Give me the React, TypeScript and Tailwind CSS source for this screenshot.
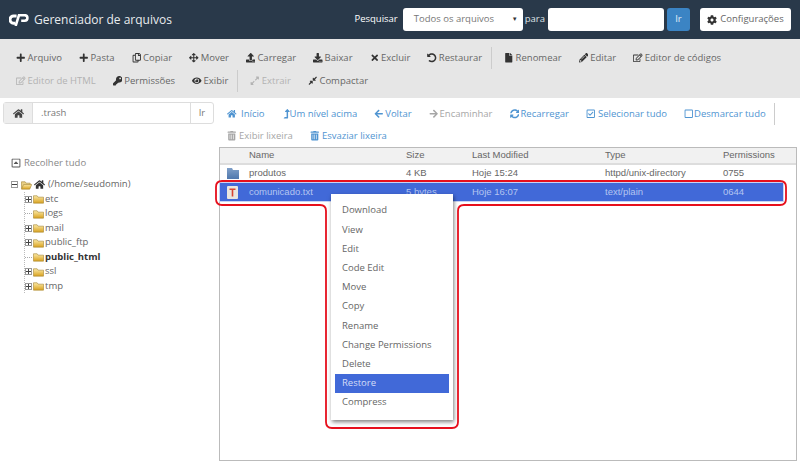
import { ReactNode } from "react";
import {
  FaArrowLeft,
  FaArrowRight,
  FaArrowsAlt,
  FaCog,
  FaCompressAlt,
  FaDownload,
  FaExpandAlt,
  FaEye,
  FaFile,
  FaHome,
  FaKey,
  FaLevelUpAlt,
  FaPencilAlt,
  FaPlus,
  FaRegCaretSquareUp,
  FaRegCheckSquare,
  FaRegCopy,
  FaRegEdit,
  FaRegSquare,
  FaSyncAlt,
  FaTimes,
  FaTrashAlt,
  FaUndoAlt,
  FaUpload,
} from "react-icons/fa";

const sans = "font-['Open_Sans',sans-serif]";
const arial = "font-['Liberation_Sans',Arial,sans-serif]";

function Tool({ icon, label, off }: { icon: ReactNode; label: string; off?: boolean }) {
  return (
    <span className={`flex items-center gap-[2px] whitespace-nowrap ${off ? "text-[#b3b3b3]" : "text-[#666]"}`}>
      <span className={`text-[9.5px] ${off ? "text-[#b3b3b3]" : "text-[#333]"}`}>{icon}</span>
      {label}
    </span>
  );
}

function Nav({ icon, label, off, slot }: { icon: ReactNode; label: string; off?: boolean; slot: string }) {
  return (
    <span className={`flex items-center whitespace-nowrap ${off ? "text-[#a6a6a6]" : "text-[#4f94d1]"}`}>
      <span className={`text-[9.5px] ${slot}`}>{icon}</span>
      {label}
    </span>
  );
}

function Sep() {
  return <span className="block w-px h-[22px] bg-[#ccc]" />;
}

function Folder({ open }: { open?: boolean }) {
  return (
    <svg width="11" height="10" viewBox="0 0 12 10" className="shrink-0">
      <defs>
        <linearGradient id="fold" x1="0" y1="0" x2="0" y2="1">
          <stop offset="0" stopColor="#fbe9a6" />
          <stop offset="1" stopColor="#d9a21f" />
        </linearGradient>
      </defs>
      {open ? (
        <>
          <path d="M0.5 9V1.5h4l1 1.5h4.5v2" fill="#e8cf86" stroke="#a98a3c" strokeWidth="0.7" />
          <path d="M0.5 9.5 2.8 4.5h8.9l-2.2 5z" fill="url(#fold)" stroke="#a98a3c" strokeWidth="0.7" />
        </>
      ) : (
        <path d="M0.5 1.5h4l1 1.5h6v6.5h-11z" fill="url(#fold)" stroke="#a98a3c" strokeWidth="0.7" />
      )}
    </svg>
  );
}

function Expander({ open }: { open?: boolean }) {
  return (
    <span className="relative w-[7px] h-[7px] border border-[#999] bg-white shrink-0">
      <span className="absolute left-0 top-[2px] w-[5px] h-px bg-[#444]" />
      {!open && <span className="absolute left-[2px] top-0 w-px h-[5px] bg-[#444]" />}
    </span>
  );
}

function TreeRow({ label, expand, bold }: { label: string; expand?: boolean; bold?: boolean }) {
  return (
    <div className="flex items-center h-[14.5px]">
      <span className="w-[7px] flex justify-center mr-[1px]">
        {expand ? <Expander /> : <span className="w-[7px] border-t border-dotted border-[#aaa]" />}
      </span>
      <Folder />
      <span className={`ml-[1px] ${bold ? "font-bold text-[#333]" : ""}`}>{label}</span>
    </div>
  );
}

const cols = "grid grid-cols-[29px_157px_66px_133px_118px_1fr] items-center";

const menu = ["Download", "View", "Edit", "Code Edit", "Move", "Copy", "Rename", "Change Permissions", "Delete", "Restore", "Compress"];

export default function App() {
  return (
    <div className={`relative w-[800px] h-[463px] overflow-hidden bg-white text-[9.5px] ${sans}`}>
      <header className="h-[39px] bg-[#29394a] flex items-center pl-[9px] pr-[9px] text-white">
        <svg width="20" height="12" viewBox="0 0 20 12" className="shrink-0">
          <path d="M7.6 2H4.8a3.2 3.2 0 0 0-.4 7.2h1.8" fill="none" stroke="#fff" strokeWidth="3" />
          <path d="M6.6 12 10 1.2h5.6a2.6 2.6 0 0 1 0 5.6h-3.4" fill="none" stroke="#fff" strokeWidth="2.6" />
        </svg>
        <span className="ml-[5px] text-[12px] text-[#e8ebee]">Gerenciador de arquivos</span>
        <span className="ml-auto">Pesquisar</span>
        <span className="ml-[5px] w-[120px] h-[23px] bg-white rounded-[3px] flex items-center justify-between pl-[11px] pr-[5px] text-[#777]">
          Todos os arquivos
          <span className="text-[6px] text-[#333]">▼</span>
        </span>
        <span className="ml-[2px] text-[#dfe3e7]">para</span>
        <span className="ml-[3px] w-[116px] h-[23px] bg-white rounded-[3px]" />
        <span className="ml-[3px] w-[23px] h-[23px] bg-[#3b84c4] rounded-[3px] flex items-center justify-center text-[#e4eef7]">Ir</span>
        <span className="ml-[10px] w-[91px] h-[23px] bg-white rounded-[3px] flex items-center justify-center gap-[3px] text-[#666]">
          <FaCog className="text-[10px] text-[#333]" />
          Configurações
        </span>
      </header>

      <div className="h-[59px] bg-[#e6e6e6] pl-[16px] pt-[8px] flex flex-col gap-[1px]">
        <div className="h-[22px] flex items-center gap-[17px]">
          <Tool icon={<FaPlus />} label="Arquivo" />
          <Tool icon={<FaPlus />} label="Pasta" />
          <Tool icon={<FaRegCopy />} label="Copiar" />
          <Tool icon={<FaArrowsAlt />} label="Mover" />
          <Tool icon={<FaUpload />} label="Carregar" />
          <Tool icon={<FaDownload />} label="Baixar" />
          <Tool icon={<FaTimes />} label="Excluir" />
          <Tool icon={<FaUndoAlt />} label="Restaurar" />
          <span className="-ml-[8px] -mr-[5px]"><Sep /></span>
          <Tool icon={<FaFile />} label="Renomear" />
          <Tool icon={<FaPencilAlt />} label="Editar" />
          <Tool icon={<FaRegEdit />} label="Editor de códigos" />
        </div>
        <div className="h-[22px] flex items-center gap-[17px]">
          <Tool off icon={<FaRegEdit />} label="Editor de HTML" />
          <Tool icon={<FaKey />} label="Permissões" />
          <Tool icon={<FaEye />} label="Exibir" />
          <span className="-ml-[8px] -mr-[5px]"><Sep /></span>
          <Tool off icon={<FaExpandAlt />} label="Extrair" />
          <Tool icon={<FaCompressAlt />} label="Compactar" />
        </div>
      </div>

      <div className="flex h-[365px]">
        <aside className="w-[219px] shrink-0 pl-[3px]">
          <div className="mt-[4px] w-[211px] h-[22px] flex border border-[#ddd] rounded-[3px] text-[#777]">
            <span className="w-[29px] bg-[#eee] border-r border-[#ddd] flex items-center justify-center text-[11px] text-[#444]">
              <FaHome />
            </span>
            <span className="flex-1 flex items-center pl-[8px]">.trash</span>
            <span className="w-[23px] border-l border-[#ddd] flex items-center justify-center">Ir</span>
          </div>
          <div className="mt-[32px] ml-[8px] flex items-center gap-[3px] text-[#888]">
            <FaRegCaretSquareUp className="text-[10px] text-[#555]" />
            Recolher tudo
          </div>
          <div className="mt-[7px] ml-[8px] text-[#666] relative">
            <div className="flex items-center h-[14.5px]">
              <Expander open />
              <span className="ml-[3px]"><Folder open /></span>
              <FaHome className="ml-[2px] text-[11px] text-[#333]" />
              <span className="ml-[3px]">(/home/seudomin)</span>
            </div>
            <div className="ml-[13px] border-l border-dotted border-[#bbb]">
              <TreeRow label="etc" expand />
              <TreeRow label="logs" />
              <TreeRow label="mail" expand />
              <TreeRow label="public_ftp" expand />
              <TreeRow label="public_html" bold />
              <TreeRow label="ssl" expand />
              <TreeRow label="tmp" expand />
            </div>
          </div>
        </aside>

        <main className="flex-1 min-w-0">
          <div className="h-[49px] pl-[8px] pt-[5px]">
            <div className="h-[22px] flex items-center gap-[17px]">
              <Nav slot="w-[14px]" icon={<FaHome />} label="Início" />
              <Nav slot="w-[8px]" icon={<FaLevelUpAlt />} label="Um nível acima" />
              <Nav slot="w-[11px]" icon={<FaArrowLeft />} label="Voltar" />
              <Nav off slot="w-[11px]" icon={<FaArrowRight />} label="Encaminhar" />
              <Nav slot="w-[11px]" icon={<FaSyncAlt />} label="Recarregar" />
              <Nav slot="w-[12px]" icon={<FaRegCheckSquare />} label="Selecionar tudo" />
              <Nav slot="w-[10px]" icon={<FaRegSquare />} label="Desmarcar tudo" />
              <span className="-ml-[9px]"><Sep /></span>
            </div>
            <div className="h-[22px] flex items-center gap-[17px]">
              <Nav off slot="w-[12px]" icon={<FaTrashAlt />} label="Exibir lixeira" />
              <Nav slot="w-[12px]" icon={<FaTrashAlt />} label="Esvaziar lixeira" />
            </div>
          </div>
          <div className={`relative w-[578px] h-[314px] border border-[#bbb] text-[9.5px] text-[#666] ${arial}`}>
            <div className={`${cols} h-[17px] bg-[#f1f1f1] border-b-2 border-[#ddd]`}>
              <span />
              <span>Name</span>
              <span>Size</span>
              <span>Last Modified</span>
              <span>Type</span>
              <span>Permissions</span>
            </div>
            <div className={`${cols} h-[17px]`}>
              <svg width="12" height="11" viewBox="0 0 12 11" className="ml-[7px]">
                <defs>
                  <linearGradient id="blue" x1="0" y1="0" x2="0" y2="1">
                    <stop offset="0" stopColor="#7f9fc8" />
                    <stop offset="1" stopColor="#4f78ad" />
                  </linearGradient>
                </defs>
                <path d="M0 0h5l1 2h6v9H0z" fill="url(#blue)" />
              </svg>
              <span>produtos</span>
              <span>4 KB</span>
              <span>Hoje 15:24</span>
              <span>httpd/unix-directory</span>
              <span>0755</span>
            </div>
            <div className={`${cols} h-[18px] mt-px mr-[13px] bg-[#4169d8] text-[#b4c5f0] outline outline-1 outline-[#c8d4f4]`}>
              <svg width="11" height="13" viewBox="0 0 11 13" className="ml-[7px]">
                <rect width="11" height="13" rx="1" fill="#e9e6de" />
                <path d="M2.5 2.5h6v1.6h-2.2v6.4h-1.6v-6.4h-2.2z" fill="#d8432f" />
              </svg>
              <span>comunicado.txt</span>
              <span>5 bytes</span>
              <span>Hoje 16:07</span>
              <span>text/plain</span>
              <span>0644</span>
            </div>
            <div className={`absolute left-[111px] top-[46px] w-[122px] h-[226px] bg-white shadow-[1px_2px_4px_rgba(0,0,0,0.5)] pt-[7px] text-[9.5px] text-[#666] ${sans}`}>
              {menu.map((item) => (
                <div
                  key={item}
                  className={`h-[19.2px] mx-[4px] pl-[7px] flex items-center ${item === "Restore" ? "bg-[#4169d8] text-[#d5def7]" : ""}`}
                >
                  {item}
                </div>
              ))}
            </div>
          </div>
        </main>
      </div>

      {/* red annotation around the selected row and its menu */}
      <svg className="absolute left-0 top-0 pointer-events-none" width="800" height="463">
        <path
          d="M222 181H780Q786 181 786 187V199Q786 205 780 205H464Q458 205 458 211V422Q458 428 452 428H332Q326 428 326 422V211Q326 205 320 205H222Q216 205 216 199V187Q216 181 222 181Z"
          fill="none"
          stroke="#e60f1c"
          strokeWidth="1.8"
        />
      </svg>
    </div>
  );
}
